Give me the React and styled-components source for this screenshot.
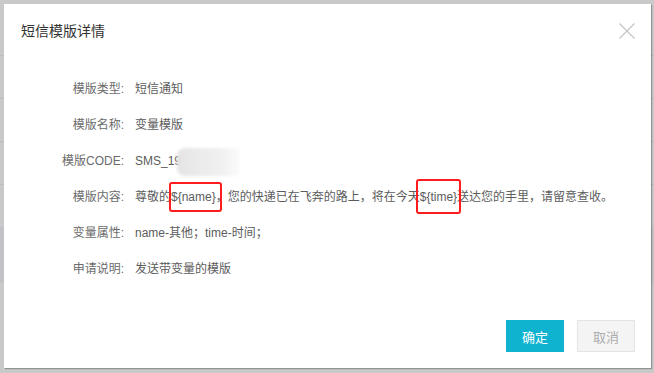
import React from "react";
import styled, { createGlobalStyle } from "styled-components";

const Global = createGlobalStyle`
  html, body { margin: 0; padding: 0; }
  body {
    width: 654px;
    height: 373px;
    overflow: hidden;
    font-family: "Liberation Sans", "Noto Sans CJK SC", sans-serif;
    background-color: #c9c9c9;
  }
`;

const Backdrop = styled.div`
  width: 654px;
  height: 373px;
  box-sizing: border-box;
  padding: 4px 0 0 4px;
  background-color: #c9c9c9;
  background-image:
    linear-gradient(#bdbdbd, #bdbdbd),
    linear-gradient(#bdbdbd, #bdbdbd),
    linear-gradient(#bdbdbd, #bdbdbd),
    linear-gradient(#bdbdbd, #bdbdbd),
    linear-gradient(#c0c2c5, #c0c2c5);
  background-size: 100% 1px, 100% 1px, 100% 1px, 100% 1px, 100% 56px;
  background-position: 0 55px, 0 98px, 0 141px, 0 184px, 0 227px;
  background-repeat: no-repeat;
`;

const Modal = styled.div`
  width: 647px;
  height: 364px;
  background: #fff;
  box-shadow: 1px 1px 1px rgba(0, 0, 0, 0.28);
  display: flex;
  flex-direction: column;
  box-sizing: border-box;
`;

const Header = styled.div`
  height: 50px;
  display: flex;
  align-items: center;
  justify-content: space-between;
  padding: 0 16px 0 17px;
`;

const Title = styled.div`
  font-size: 14px;
  color: #333;
  font-family: "Noto Sans CJK SC", sans-serif;
  padding-top: 1px;
`;

const Close = styled.button`
  border: 0;
  background: none;
  padding: 0;
  width: 16px;
  height: 16px;
  display: flex;
  margin-top: 3px;
`;

const Body = styled.div`
  margin-top: 17px;
  display: flex;
  flex-direction: column;
`;

const Row = styled.div`
  display: grid;
  grid-template-columns: 120px 1fr;
  column-gap: 11px;
  height: 36px;
  line-height: 36px;
  font-size: 12px;
`;

const Label = styled.div`
  text-align: right;
  color: #6b6b6b;
  white-space: nowrap;
`;

const Value = styled.div`
  color: #5c5c5c;
  white-space: nowrap;
  display: flex;
  align-items: center;
`;

const Mark = styled.span`
  position: relative;
  &::after {
    content: "";
    position: absolute;
    left: ${(p) => p.$l}px;
    right: ${(p) => p.$r}px;
    top: ${(p) => p.$t}px;
    bottom: ${(p) => p.$b}px;
    border: 2px solid #ff1c1c;
    border-radius: 3px;
  }
`;

const Mosaic = styled.span`
  display: inline-block;
  width: 62px;
  height: 28px;
  margin-left: -4px;
  margin-top: 1px;
  background: linear-gradient(90deg, #e4e4e4 0%, #ebebeb 35%, #f0f0f0 70%, #fafafa 100%);
  filter: blur(1.5px);
  border-radius: 8px 4px 4px 8px;
`;

const Footer = styled.div`
  margin-top: auto;
  display: flex;
  justify-content: flex-end;
  gap: 13px;
  padding: 0 16px 16px 0;
`;

const Button = styled.button`
  width: 58px;
  height: 32px;
  box-sizing: border-box;
  font-size: 13px;
  font-family: "Noto Sans CJK SC", sans-serif;
  padding: 0;
  border: 1px solid ${(p) => (p.$primary ? "#0fb3cf" : "#e4e4e4")};
  background: ${(p) => (p.$primary ? "#0fb3cf" : "#f4f4f4")};
  color: ${(p) => (p.$primary ? "#fff" : "#acacac")};
`;

export default function App() {
  return (
    <>
      <Global />
      <Backdrop>
        <Modal>
          <Header>
            <Title>短信模版详情</Title>
            <Close aria-label="close">
              <svg width="16" height="16" viewBox="0 0 16 16">
                <path d="M0.5 0.5 L15.5 15.5 M15.5 0.5 L0.5 15.5" stroke="#c6c6c6" strokeWidth="1.3" fill="none" />
              </svg>
            </Close>
          </Header>
          <Body>
            <Row>
              <Label>模版类型:</Label>
              <Value>短信通知</Value>
            </Row>
            <Row>
              <Label>模版名称:</Label>
              <Value>变量模版</Value>
            </Row>
            <Row>
              <Label>模版CODE:</Label>
              <Value>
                SMS_19
                <Mosaic />
              </Value>
            </Row>
            <Row>
              <Label>模版内容:</Label>
              <Value>
                尊敬的
                <Mark $l={-2} $r={-6} $t={3} $b={3}>{"${name}"}</Mark>
                ，您的快递已在飞奔的路上，将在今天
                <Mark $l={-4} $r={-4} $t={0} $b={1}>{"${time}"}</Mark>
                送达您的手里，请留意查收。
              </Value>
            </Row>
            <Row>
              <Label>变量属性:</Label>
              <Value>name-其他；time-时间；</Value>
            </Row>
            <Row>
              <Label>申请说明:</Label>
              <Value>发送带变量的模版</Value>
            </Row>
          </Body>
          <Footer>
            <Button $primary>确定</Button>
            <Button>取消</Button>
          </Footer>
        </Modal>
      </Backdrop>
    </>
  );
}
